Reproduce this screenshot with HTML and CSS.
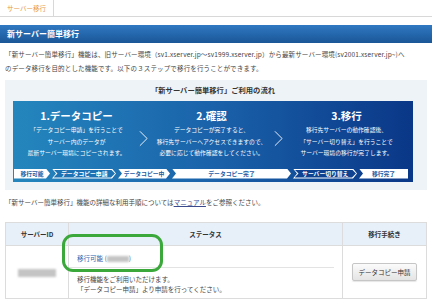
FILE: index.html
```html
<!DOCTYPE html>
<html lang="ja">
<head>
    <meta charset="UTF-8">
    <title>新サーバー簡単移行</title>
    <link rel="stylesheet" href="styles.css">
</head>
<body>
    <div class="tabs">
        <span class="tab">サーバー移行</span>
    </div>

    <h1 class="section-title">新サーバー簡単移行</h1>

    <p class="intro">「新サーバー簡単移行」機能は、旧サーバー環境（sv1.xserver.jp～sv1999.xserver.jp）から最新サーバー環境(sv2001.xserver.jp~)へ<br>のデータ移行を目的とした機能です。以下の３ステップで移行を行うことができます。</p>

    <div class="flow">
        <h2 class="flow-title">「新サーバー簡単移行」ご利用の流れ</h2>
        <div class="flow-box">
            <div class="steps">
                <div class="step">
                    <h3>1.データコピー</h3>
                    <p>「データコピー申請」を行うことで<br>サーバー内のデータが<br>最新サーバー環境にコピーされます。</p>
                </div>
                <svg class="chevron" viewBox="0 0 10 18"><polyline points="1,1 9,9 1,17" /></svg>
                <div class="step">
                    <h3>2.確認</h3>
                    <p>データコピーが完了すると、<br>移行先サーバーへアクセスできますので、<br>必要に応じて動作確認をしてください。</p>
                </div>
                <svg class="chevron" viewBox="0 0 10 18"><polyline points="1,1 9,9 1,17" /></svg>
                <div class="step">
                    <h3>3.移行</h3>
                    <p>移行先サーバーの動作確認後、<br>「サーバー切り替え」を行うことで<br>サーバー環境の移行が完了します。</p>
                </div>
            </div>
            <div class="status-bar">
                <span class="pill pill-first pill-sm">移行可能</span>
                <span class="pill-outline pill-lg"><span>データコピー申請</span></span>
                <span class="pill pill-md">データコピー中</span>
                <span class="pill pill-xl">データコピー完了</span>
                <span class="pill-outline pill-lg dark"><span>サーバー切り替え</span></span>
                <span class="pill pill-last pill-end">移行完了</span>
            </div>
        </div>
    </div>

    <p class="note">「新サーバー簡単移行」機能の詳細な利用手順については<a href="#">マニュアル</a>をご参照ください。</p>

    <table class="server-table">
        <thead>
            <tr>
                <th class="col-id">サーバーID</th>
                <th class="col-status">ステータス</th>
                <th class="col-action">移行手続き</th>
            </tr>
        </thead>
        <tbody>
            <tr>
                <td class="col-id"><span class="blur blur-id"></span></td>
                <td class="col-status">
                    <div class="status-head"><a href="#">移行可能 (<span class="blur blur-date"></span>)</a></div>
                    <div class="status-body">移行機能をご利用いただけます。<br>「データコピー申請」より申請を行ってください。</div>
                </td>
                <td class="col-action"><button class="btn">データコピー申請</button></td>
            </tr>
        </tbody>
    </table>

    <div class="mark"></div>
</body>
</html>
```

FILE: styles.css
```css
body {
    font-family: "Noto Sans CJK JP", "Noto Sans", sans-serif;
    font-size: 6.5px;
    margin: 0;
    color: #444;
    background-color: #fff;
    position: relative;
}
.tabs {
    display: flex;
    height: 16px;
    border-bottom: 1px solid #d8d8d8;
}
.tab {
    width: 53px;
    line-height: 16px;
    text-align: center;
    color: #e8983f;
    border-right: 1px solid #d8d8d8;
}
.section-title {
    margin: 8px 0 0;
    height: 18px;
    line-height: 18px;
    padding-left: 7px;
    font-size: 8px;
    font-weight: bold;
    color: #fff;
    background: linear-gradient(to bottom, #3079c2, #1a5697);
}
.intro {
    margin: 4px 5px 0;
    line-height: 14px;
    letter-spacing: 0.14px;
    white-space: nowrap;
}
.flow {
    margin: 5px 5px 0;
    padding: 0 14px 8px 8px;
    background-color: #eef3f8;
}
.flow-title {
    margin: 0;
    line-height: 21px;
    font-size: 7.3px;
    font-weight: bold;
    text-align: center;
    color: #333;
}
.flow-box {
    padding: 8px 4px 3px 1px;
    background: linear-gradient(to right, #2486bd, #1a62aa 50%, #0a3787);
    color: #fff;
}
.steps {
    display: grid;
    grid-template-columns: 1fr 10px 1fr 10px 1fr;
    align-items: start;
}
.step {
    text-align: center;
}
.step h3 {
    margin: 0;
    font-size: 10.5px;
    line-height: 14px;
}
.step p {
    margin: 1px 0 0;
    font-size: 5.8px;
    line-height: 11.5px;
    white-space: nowrap;
}
.chevron {
    width: 9px;
    height: 17px;
    margin-top: 21px;
    fill: none;
    stroke: #fff;
    stroke-width: 1;
}
.status-bar {
    display: flex;
    gap: 2px;
    margin-top: 10px;
    height: 10px;
}
.pill,
.pill-outline span {
    display: block;
    height: 10px;
    line-height: 10px;
    font-size: 5.8px;
    font-weight: bold;
    text-align: center;
    white-space: nowrap;
    clip-path: polygon(0 0, calc(100% - 4px) 0, 100% 50%, calc(100% - 4px) 100%, 0 100%, 4px 50%);
}
.pill {
    background-color: #fff;
    color: #1d5ba3;
}
.pill-first {
    clip-path: polygon(0 0, calc(100% - 4px) 0, 100% 50%, calc(100% - 4px) 100%, 0 100%);
}
.pill-last {
    clip-path: polygon(0 0, 100% 0, 100% 100%, 0 100%, 4px 50%);
}
.pill-outline {
    display: block;
    height: 10px;
    background-color: #fff;
    clip-path: polygon(0 0, calc(100% - 4px) 0, 100% 50%, calc(100% - 4px) 100%, 0 100%, 4px 50%);
}
.pill-outline span {
    height: 8px;
    line-height: 8px;
    margin: 1px 1px 1px 1.5px;
    color: #fff;
    background-color: #1d72b3;
}
.pill-outline.dark span {
    background-color: #0f4391;
}
.pill-sm { width: 36px; }
.pill-md { width: 52px; }
.pill-lg { width: 64px; }
.pill-xl { width: 119px; }
.pill-end { width: 49px; }
.note {
    margin: 6px 5px 0;
    line-height: 12px;
}
.note a {
    color: #3b4a8c;
}
.server-table {
    margin: 14px 5px 0;
    width: 422px;
    border-collapse: collapse;
    table-layout: fixed;
}
.server-table th,
.server-table td {
    border: 1px solid #dcdcdc;
    padding: 0;
}
.server-table th {
    height: 22px;
    background-color: #e7eff8;
    color: #333;
    font-weight: bold;
}
.col-id { width: 62px; text-align: center; }
.col-action { width: 83px; text-align: center; }
.server-table td.col-status {
    text-align: left;
    vertical-align: top;
}
.status-head {
    margin-right: 8px;
    padding: 7px 0 4px 8px;
    line-height: 10px;
    border-bottom: 1px solid #e3e3e3;
}
.status-head a {
    color: #2866b0;
    text-decoration: none;
}
.status-body {
    padding: 6px 0 4px 8px;
    line-height: 10px;
}
.blur {
    display: inline-block;
    background-color: #c4c4c4;
    filter: blur(1.3px);
    vertical-align: middle;
}
.blur-date {
    width: 22px;
    height: 6px;
}
.blur-id {
    width: 38px;
    height: 8px;
}
.btn {
    font-family: inherit;
    font-size: 6.5px;
    width: 65px;
    height: 18px;
    padding: 0;
    color: #333;
    border: 1px solid #c6c6c6;
    border-radius: 2px;
    background: linear-gradient(to bottom, #fbfbfb, #e4e4e4);
    box-shadow: 0 1px 1px rgba(0,0,0,0.1);
}
.mark {
    position: absolute;
    left: 62px;
    top: 234px;
    width: 101px;
    height: 38px;
    box-sizing: border-box;
    border: 3px solid #3aa83a;
    border-radius: 11px;
}
```
